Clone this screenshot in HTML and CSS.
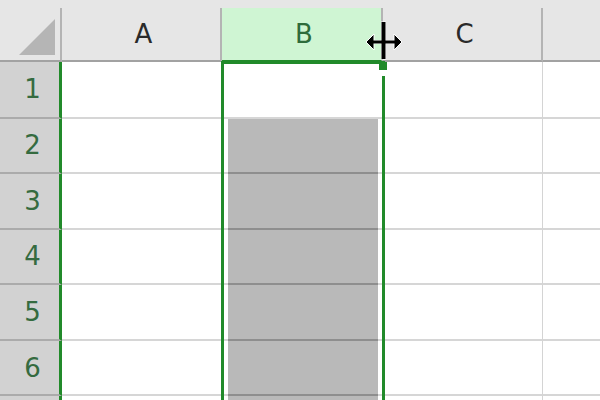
FILE: index.html
```html
<!DOCTYPE html>
<html>
<head>
<meta charset="utf-8">
<link rel="stylesheet" href="styles.css">
</head>
<body>
<div class="sheet">
  <div class="topstrip"></div>

  <div class="hd corner"><svg class="tri" width="40" height="40" viewBox="0 0 40 40"><polygon points="1,37 37,1 37,37" fill="#b5b5b5"/></svg></div>
  <div class="hd col">A</div>
  <div class="hd col sel">B</div>
  <div class="hd col">C</div>
  <div class="hd col last"></div>

  <div class="rh">1</div><div class="cell"></div><div class="cell bc"></div><div class="cell"></div><div class="cell last"></div>
  <div class="rh">2</div><div class="cell"></div><div class="cell bc g"><div class="fill"></div></div><div class="cell"></div><div class="cell last"></div>
  <div class="rh">3</div><div class="cell"></div><div class="cell bc g"><div class="fill"></div></div><div class="cell"></div><div class="cell last"></div>
  <div class="rh">4</div><div class="cell"></div><div class="cell bc g"><div class="fill"></div></div><div class="cell"></div><div class="cell last"></div>
  <div class="rh">5</div><div class="cell"></div><div class="cell bc g"><div class="fill"></div></div><div class="cell"></div><div class="cell last"></div>
  <div class="rh">6</div><div class="cell"></div><div class="cell bc g"><div class="fill"></div></div><div class="cell"></div><div class="cell last"></div>
  <div class="rh"></div><div class="cell"></div><div class="cell bc g"><div class="fill"></div></div><div class="cell"></div><div class="cell last"></div>

  <div class="selection"></div>
  <div class="handle"></div>
  <div class="gap"></div>
  <svg class="cursor" width="40" height="40" viewBox="0 0 40 40">
    <g stroke="#fff" stroke-width="1" fill="#000">
      <rect x="15.5" y="1" width="4" height="37"/>
      <rect x="3" y="19.5" width="30" height="3"/>
      <polygon points="0,21 8,13 8,29"/>
      <polygon points="36,21 28,13 28,29"/>
    </g>
    <rect x="15.5" y="1" width="4" height="37" fill="#000"/>
    <rect x="3" y="19.5" width="30" height="3" fill="#000"/>
  </svg>
</div>
</body>
</html>
```
FILE: styles.css
```css
html, body {
  margin: 0;
  padding: 0;
  background: #ffffff;
  overflow: hidden;
}

.sheet {
  position: relative;
  width: 600px;
  height: 400px;
  display: grid;
  grid-template-columns: 62px 160px 161px 160px 1fr;
  grid-template-rows: 8px 54px 56.5px repeat(6, 55.6px);
  overflow: hidden;
  font-family: "DejaVu Sans", "Noto Sans CJK JP", sans-serif;
}

.topstrip {
  grid-column: 1 / -1;
  background: #e6e6e6;
}

.hd {
  background: #e6e6e6;
  border-right: 2px solid #b4b4b4;
  border-bottom: 2px solid #a2a2a2;
  box-sizing: border-box;
  display: flex;
  align-items: center;
  justify-content: center;
  padding-left: 5px;
  font-size: 26px;
  color: #2a2a2a;
}

.hd.corner {
  justify-content: flex-start;
  align-items: flex-start;
  padding: 10px 0 0 18px;
}

.tri {
  display: block;
}

.hd.sel {
  background: #cff5d3;
  color: #2e6b3b;
  border-bottom-color: #218a2a;
}

.hd.last {
  border-right: none;
}

.rh {
  background: #d2d2d2;
  border-bottom: 2px solid #ababab;
  border-right: 3px solid #218a2a;
  box-sizing: border-box;
  display: flex;
  align-items: center;
  justify-content: center;
  padding-left: 6px;
  font-size: 26px;
  color: #356b40;
}

.cell {
  border-right: 1px solid #d4d4d4;
  border-bottom: 2px solid #d6d6d6;
  box-sizing: border-box;
  background: #ffffff;
}

.cell.last {
  border-right: none;
}

.cell.bc {
  display: flex;
  flex-direction: column;
  padding: 0 4px 0 6px;
}

.cell.bc.g {
  border-bottom: none;
  background: linear-gradient(to top, #d6d6d6 0, #d6d6d6 2px, #ffffff 2px);
}

.fill {
  flex: 1 1 auto;
  background: #b9b9b9;
  border-bottom: 2px solid #8e8e8e;
}

.selection {
  position: absolute;
  left: 221px;
  top: 61px;
  width: 164px;
  height: 400px;
  border: 3px solid #218a2a;
  border-bottom: none;
  box-sizing: border-box;
}

.handle {
  position: absolute;
  left: 379px;
  top: 62px;
  width: 8px;
  height: 8px;
  background: #218a2a;
}

.gap {
  position: absolute;
  left: 382px;
  top: 70px;
  width: 3px;
  height: 6px;
  background: #ffffff;
}

.cursor {
  position: absolute;
  left: 366px;
  top: 21px;
}
```
